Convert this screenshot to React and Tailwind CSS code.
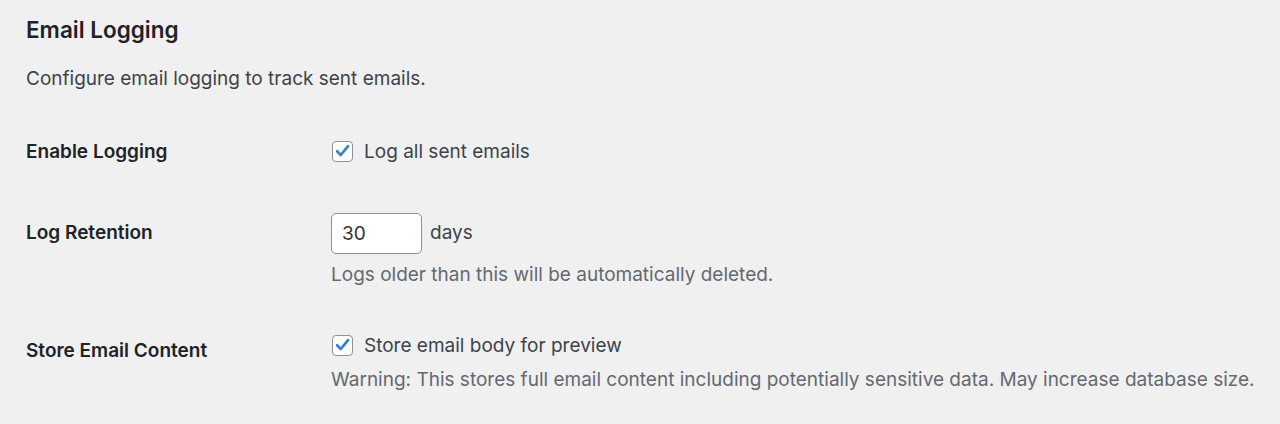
import React, { useState } from "react";

function Check({ checked, onChange }) {
  return (
    <button
      type="button"
      onClick={onChange}
      className="w-[21px] h-[21px] shrink-0 rounded-[4px] border border-[#8c8f94] bg-white flex items-center justify-center"
    >
      {checked && (
        <svg viewBox="0 0 20 20" className="w-[20px] h-[20px]">
          <path d="M4.3 10.3 L8.2 14.2 L15.8 4.8" fill="none" stroke="#3582c4" strokeWidth="2.8" strokeLinecap="round" strokeLinejoin="round" />
        </svg>
      )}
    </button>
  );
}

export default function App() {
  const [logAll, setLogAll] = useState(true);
  const [storeBody, setStoreBody] = useState(true);
  const [days, setDays] = useState("30");

  return (
    <div className="min-h-screen bg-[#f0f0f1] px-[26px] text-[#1d2327]" style={{ fontFamily: "Inter, 'Noto Sans', sans-serif" }}>
      {/* Section header */}
      <h2 className="pt-[16px] text-[22.5px] leading-[28px] font-semibold">Email Logging</h2>
      <p className="mt-[23px] text-[19px] leading-[24px] text-[#3c434a]">Configure email logging to track sent emails.</p>

      {/* Enable logging */}
      <div className="flex pt-[49px]">
        <div className="w-[306px] shrink-0 pt-px text-[19px] leading-[21px] font-semibold">Enable Logging</div>
        <label className="flex items-center gap-[11px] text-[19px] leading-[21px] text-[#3c434a]">
          <Check checked={logAll} onChange={() => setLogAll(!logAll)} />
          <span className="pt-px">Log all sent emails</span>
        </label>
      </div>

      {/* Retention */}
      <div className="flex mt-[51px]">
        <div className="w-[306px] shrink-0 pt-[8px] text-[19px] leading-[24px] font-semibold">Log Retention</div>
        <div className="-ml-px">
          <div className="flex items-center gap-[8px] text-[19px] text-[#3c434a]">
            <input
              value={days}
              onChange={(e) => setDays(e.target.value)}
              className="w-[91px] h-[41px] rounded-[5px] border border-[#8c8f94] bg-white px-[10px] text-[19px] text-[#2c3338] outline-none"
            />
            days
          </div>
          <p className="mt-[9px] text-[19px] leading-[24px] text-[#646970]">Logs older than this will be automatically deleted.</p>
        </div>
      </div>

      {/* Store content */}
      <div className="flex mt-[47px]">
        <div className="w-[306px] shrink-0 pt-[5px] text-[19px] leading-[24px] font-semibold">Store Email Content</div>
        <div className="-ml-px">
          <label className="flex items-center gap-[11px] pl-px text-[19px] leading-[21px] text-[#3c434a]">
            <Check checked={storeBody} onChange={() => setStoreBody(!storeBody)} />
            <span className="pt-px">Store email body for preview</span>
          </label>
          <p className="mt-[12px] whitespace-nowrap text-[19px] leading-[24px] text-[#646970]">
            Warning: This stores full email content including potentially sensitive data. May increase database size.
          </p>
        </div>
      </div>
    </div>
  );
}
